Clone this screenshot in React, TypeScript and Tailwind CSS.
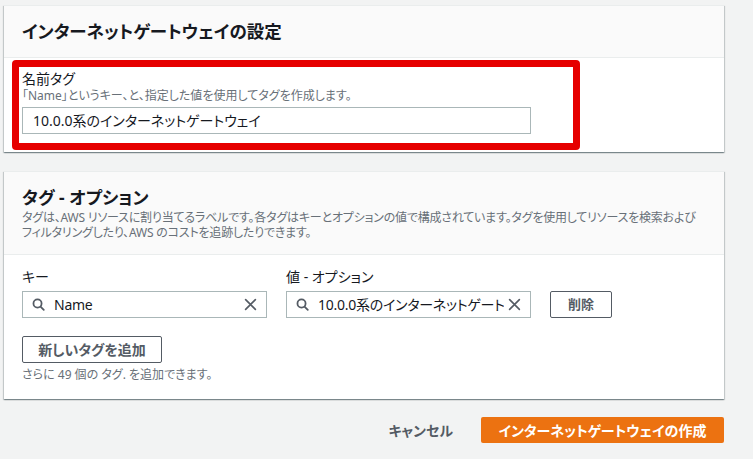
import React from 'react';

const font = { fontFamily: '"Noto Sans", "Noto Sans CJK JP", sans-serif' };

const SearchIcon = () => (
  <svg width="13" height="13" viewBox="0 0 16 16" fill="none" stroke="#545b64" strokeWidth="2.2" strokeLinecap="round">
    <circle cx="6.8" cy="6.8" r="5" />
    <path d="M10.8 10.8l3.7 3.7" />
  </svg>
);

const ClearIcon = () => (
  <svg width="13" height="13" viewBox="0 0 16 16" fill="none" stroke="#545b64" strokeWidth="2" strokeLinecap="round">
    <path d="M2 2l12 12M14 2L2 14" />
  </svg>
);

const SearchInput = ({ value }: { value: string }) => (
  <div className="flex items-center h-[27px] border border-[#aab7b8] bg-white pl-[9px] pr-[9px]">
    <SearchIcon />
    <span className="flex-1 ml-[9px] mr-[4px] text-[14px] tracking-[-0.25px] text-[#16191f] whitespace-nowrap overflow-hidden">
      {value}
    </span>
    <ClearIcon />
  </div>
);

const cardShadow =
  'bg-white shadow-[0_1px_1px_0_rgba(0,28,36,0.3),1px_1px_1px_0_rgba(0,28,36,0.15),-1px_1px_1px_0_rgba(0,28,36,0.15)] border-t border-[#eaeded]';

const App = () => {
  return (
    <div className="min-h-screen w-[753px] bg-[#f2f3f3] pt-[5px] pl-[4px] [font-feature-settings:'palt']" style={font}>
      <div className={`w-[720px] ${cardShadow}`}>
        <div className="h-[52px] flex items-center px-[18px] bg-[#fafafa] border-b border-[#eaeded]">
          <h2 className="text-[17.5px] font-bold text-[#16191f]">インターネットゲートウェイの設定</h2>
        </div>
        <div className="pt-[2px] pb-[2px] pl-[8px]">
          <div className="w-[568px] h-[90px] border-[7px] border-[#e60000] rounded-[4px] pl-[3px] pt-[3px]">
            <div className="text-[14px] leading-[18px] text-[#16191f]">名前タグ</div>
            <div className="text-[12px] leading-[16px] text-[#687078] whitespace-nowrap">「Name」というキー、と、指定した値を使用してタグを作成します。</div>
            <div className="mt-[3px] w-[509px] h-[27px] border border-[#aab7b8] flex items-center px-[10px] text-[14px] text-[#16191f]">
              10.0.0系のインターネットゲートウェイ
            </div>
          </div>
        </div>
      </div>

      <div className={`w-[720px] mt-[19px] ${cardShadow}`}>
        <div className="h-[83px] px-[18px] pt-[13px] bg-[#fafafa] border-b border-[#eaeded]">
          <h2 className="text-[17.5px] leading-[24px] font-bold text-[#16191f]">タグ - オプション</h2>
          <p className="text-[12px] leading-[15px] tracking-[-0.2px] text-[#687078] mt-[1px] whitespace-nowrap">
            タグは、AWS リソースに割り当てるラベルです。各タグはキーとオプションの値で構成されています。タグを使用してリソースを検索および
            <br />
            フィルタリングしたり、AWS のコストを追跡したりできます。
          </p>
        </div>
        <div className="px-[18px] pt-[13px] pb-[16px]">
          <div className="flex gap-[19px] items-end">
            <div className="w-[245px]">
              <div className="text-[14px] leading-[18px] text-[#16191f] mb-[5px]">キー</div>
              <SearchInput value="Name" />
            </div>
            <div className="w-[245px]">
              <div className="text-[14px] leading-[18px] text-[#16191f] mb-[5px]">値 - オプション</div>
              <SearchInput value="10.0.0系のインターネットゲートウェイ" />
            </div>
            <button className="w-[62px] h-[27px] border border-[#545b64] rounded-[2px] bg-white text-[13px] font-bold text-[#545b64]">
              削除
            </button>
          </div>
          <button className="mt-[18px] w-[140px] h-[27px] border border-[#545b64] rounded-[2px] bg-white text-[14px] font-bold text-[#545b64]">
            新しいタグを追加
          </button>
          <div className="mt-[4px] text-[12px] leading-[16px] text-[#687078]">さらに 49 個の タグ. を追加できます。</div>
        </div>
      </div>

      <div className="w-[720px] flex justify-end items-center gap-[28px] mt-[18px]">
        <button className="text-[14px] font-bold text-[#545b64]">キャンセル</button>
        <button className="w-[243px] h-[26px] rounded-[2px] bg-[#ec7211] text-white text-[14px] font-bold">
          インターネットゲートウェイの作成
        </button>
      </div>
    </div>
  );
};

export default App;
